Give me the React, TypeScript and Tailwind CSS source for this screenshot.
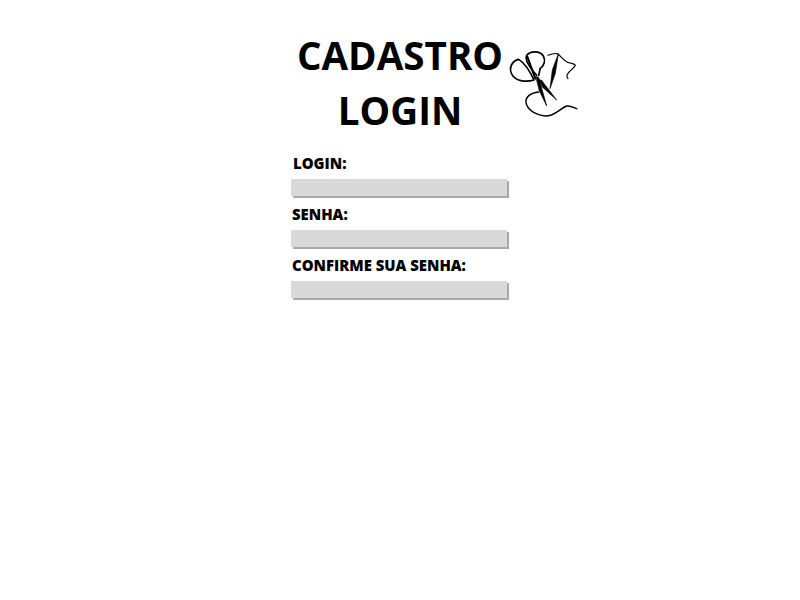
const Logo = () => {
  return (
    <svg
      viewBox="0 0 300 300"
      className="absolute left-[490px] top-[30px] w-[100px] h-[100px]"
      fill="none"
      stroke="#000"
      strokeLinecap="round"
      strokeLinejoin="round"
    >
      <path strokeWidth="5" d="M132 150C112 156 78 156 66 134C54 112 68 92 86 88C102 98 120 124 132 150Z" />
      <path strokeWidth="5" d="M140 136C124 118 102 92 110 76C122 62 150 62 160 78C168 92 162 108 150 116" />
      <path strokeWidth="6" d="M112 80L136 146" />
      <path strokeWidth="5" d="M150 118L146 136" />
      <path fill="#000" strokeWidth="2" d="M138 140L146 142L170 228L148 182Z" />
      <path fill="#000" strokeWidth="2" d="M148 150L154 150L200 210L158 172Z" />
      <path fill="#000" strokeWidth="2" d="M205 72L196 130L180 176L187 120Z" />
      <path strokeWidth="3.5" d="M174 76C184 72 196 68 204 72C214 80 222 94 236 98C246 100 254 102 256 106C250 116 240 122 234 130C230 136 230 142 234 146" />
      <path strokeWidth="4.5" d="M146 186C122 188 106 200 108 218C112 240 136 254 166 258C190 260 210 236 230 228C240 226 250 232 260 236" />
    </svg>
  );
};

const Field = ({ label, labelClass }: { label: string; labelClass?: string }) => {
  return (
    <div className="flex flex-col">
      <label className={`text-[14.9px] leading-[20px] font-extrabold text-black ${labelClass ?? ""}`}>
        {label}
      </label>
      <input
        type="text"
        className="mt-[6px] w-[216px] h-[17px] bg-[#d9d9d9] shadow-[2px_2px_0_#a9a9a9] outline-none"
      />
    </div>
  );
};

const App = () => {
  return (
    <section className="relative min-h-[600px] bg-white font-['Open_Sans',sans-serif]">
      <Logo />
      <div className="flex flex-col items-center pt-[28px]">
        <h1 className="text-[38.6px] leading-[55px] font-bold text-black text-center">
          CADASTRO
          <br />
          LOGIN
        </h1>
        <form className="flex flex-col gap-[8px] mt-[15px] w-[218px]">
          <Field label="LOGIN:" labelClass="pl-[2px]" />
          <Field label="SENHA:" labelClass="pl-[1px]" />
          <Field label="CONFIRME SUA SENHA:" labelClass="pl-[1px]" />
        </form>
      </div>
    </section>
  );
};

export default App;
